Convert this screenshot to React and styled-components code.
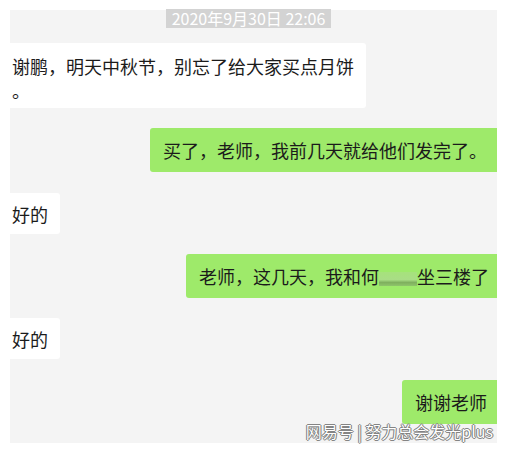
import React from "react";
import styled, { createGlobalStyle } from "styled-components";

const Global = createGlobalStyle`
  html, body { margin: 0; padding: 0; background: #ffffff; }
  body { font-family: "Noto Sans CJK SC", "Noto Sans", sans-serif; }
`;

const Page = styled.div`
  width: 507px;
  height: 451px;
  background: #ffffff;
  padding-top: 10px;
  box-sizing: border-box;
  overflow: hidden;
`;

const Panel = styled.div`
  position: relative;
  margin-left: 10px;
  width: 487px;
  height: 433px;
  background: #f4f4f4;
  display: flex;
  flex-direction: column;
`;

const TimeRow = styled.div`
  display: flex;
  justify-content: center;
  padding-right: 10px;
  margin-top: -1px;
`;

const Time = styled.div`
  height: 19px;
  padding: 0 6px;
  background: #d3d3d3;
  color: #ffffff;
  font-size: 16px;
  line-height: 19px;
  white-space: nowrap;
`;

const Row = styled.div`
  display: flex;
  justify-content: ${(p) => (p.$mine ? "flex-end" : "flex-start")};
  margin-top: ${(p) => p.$top}px;
  margin-left: ${(p) => (p.$mine ? 0 : -3)}px;
`;

const Bubble = styled.div`
  background: ${(p) => (p.$mine ? "#9eea6a" : "#ffffff")};
  color: #1b1b1b;
  font-size: 18px;
  line-height: ${(p) => p.$lh || 20}px;
  padding: ${(p) => p.$pad};
  border-radius: ${(p) => (p.$mine ? "3px 0 0 3px" : "0 3px 3px 0")};
  white-space: nowrap;
`;

const Blank = styled.span`
  display: inline-block;
  width: 38px;
  height: 14px;
  vertical-align: -2px;
  background: linear-gradient(
    to bottom,
    #a6e27c 0%,
    #a9dd86 55%,
    #7fb05e 75%,
    #8fc46b 100%
  );
  filter: blur(0.6px);
`;

const Watermark = styled.div`
  position: absolute;
  right: 4px;
  bottom: 2px;
  font-size: 16px;
  line-height: 20px;
  color: #ffffff;
  white-space: nowrap;
  text-shadow: 0 0 1px #555, 1px 0 0 #8a8a8a, -1px 0 0 #8a8a8a, 0 1px 0 #8a8a8a,
    0 -1px 0 #8a8a8a;
`;

export default function App() {
  return (
    <>
      <Global />
      <Page>
        <Panel>
          <TimeRow>
            <Time>2020年9月30日 22:06</Time>
          </TimeRow>
          <Row $top={15}>
            <Bubble $lh={24} $pad="11px 12px 6px 5px">
              谢鹏，明天中秋节，别忘了给大家买点月饼
              <br />。
            </Bubble>
          </Row>
          <Row $mine $top={20}>
            <Bubble $mine $pad="12px 10px 12px 13px">
              买了，老师，我前几天就给他们发完了。
            </Bubble>
          </Row>
          <Row $top={21}>
            <Bubble $pad="10.5px 12px 10.5px 5px">好的</Bubble>
          </Row>
          <Row $mine $top={20}>
            <Bubble $mine $pad="12px 8px 12px 13px">
              老师，这几天，我和何<Blank />坐三楼了
            </Bubble>
          </Row>
          <Row $top={20}>
            <Bubble $pad="10.5px 12px 10.5px 5px">好的</Bubble>
          </Row>
          <Row $mine $top={21}>
            <Bubble $mine $pad="12px 10px 12px 13px">
              谢谢老师
            </Bubble>
          </Row>
          <Watermark>网易号 | 努力总会发光plus</Watermark>
        </Panel>
      </Page>
    </>
  );
}
